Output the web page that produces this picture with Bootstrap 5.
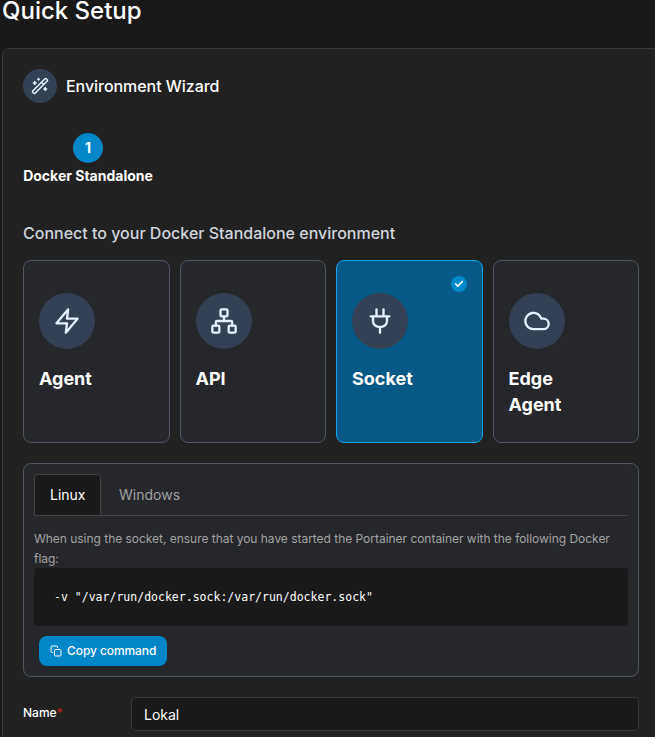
<!DOCTYPE html>
<html lang="en" data-bs-theme="dark">
<head>
<meta charset="utf-8">
<meta name="viewport" content="width=device-width, initial-scale=1">
<title>Quick Setup</title>
<link href="https://cdn.jsdelivr.net/npm/bootstrap@5.3.0/dist/css/bootstrap.min.css" rel="stylesheet">
<style>
body{background:#191919;color:#fff;font-family:Inter,"Liberation Sans",sans-serif;font-size:14px;line-height:20px;height:737px}
svg{fill:none;stroke:currentColor;stroke-width:2;stroke-linecap:round;stroke-linejoin:round;flex:none}
.page-title{font-size:24px;line-height:22px;padding:0 0 0 2px;margin:0 0 26px;font-weight:500}
.widget{width:658px;height:720px;margin-left:2px;padding:20px;background:#212121;border:1px solid #3a3a3a;border-radius:8px}
.round{background:#344054;color:#e0f2fe;flex:none}
.round-sm{width:34px;height:34px}
.round-lg{width:56px;height:56px}
.widget-title{font-size:16px;font-weight:500;margin-left:9px;letter-spacing:-.05px}
.step{width:130px;margin-top:30px}
.step-num{width:30px;height:30px;background:#0086c9;font-weight:700}
.step-name{font-weight:700;line-height:20px;margin-top:3px;white-space:nowrap}
.section-title{font-size:16px;line-height:24px;font-weight:500;color:#d0d5dd;margin:35px 0 15px}
.options{gap:10px}
.option{flex:1 1 0;min-width:0;height:183px;padding:32px 30px 0 15px;background:#26272b;border:1px solid #4d5761;border-radius:8px}
.option.chosen{background:#065986;border-color:#0ba5ec}
.option-name{font-size:18px;line-height:26px;font-weight:700;margin-top:17px}
.tick{top:15px;right:15px;width:16px;height:16px;background:#0086c9}
.panel{margin-top:20px;height:214px;padding:10px;background:#26272b;border:1px solid #4d5761;border-radius:8px}
.nav-tabs{--bs-nav-tabs-border-color:#444;border-bottom:1px solid #444}
.nav-tabs .nav-link{height:42px;padding:10px 15px;font-size:14px;line-height:20px;color:#a0a0a0;border-radius:4px 4px 0 0}
.nav-tabs .nav-link.active{width:67px;color:#fff;background:#191919;border-color:#444;margin-right:2px}
.hint{font-size:12px;line-height:20px;color:#a3a3a3;margin:13px 0 0;letter-spacing:-.027px}
.command{height:58px;padding:19px 20px;background:#191919;border-radius:4px;font-family:"DejaVu Sans Mono",monospace;font-size:11.5px;line-height:20px;color:#fff;margin:-1px 0 0;letter-spacing:.01px}
.btn-copy{height:30px;width:128px;margin:10px 0 0 5px;padding:0 0 0 11px;background:#0086c9;color:#fff;border:0;border-radius:8px;font-size:12px;font-weight:500;gap:5px;letter-spacing:-.08px}
.name-label{width:108px;font-size:12px;font-weight:500;line-height:20px;padding-top:6px}
.star{color:#b42318}
.name-input{height:34px;padding:6px 12px;font-size:14px;line-height:20px;background:#191919;border:1px solid #383838;border-radius:5px;color:#fff}
</style>
</head>
<body class="overflow-hidden">
<h1 class="page-title">Quick Setup</h1>
<main class="widget">
  <div class="d-flex align-items-center">
    <span class="round round-sm rounded-circle d-flex align-items-center justify-content-center">
      <svg width="18" height="18" viewBox="0 0 24 24"><path d="m21.64 3.64-1.28-1.28a1.21 1.21 0 0 0-1.72 0L2.36 18.64a1.21 1.21 0 0 0 0 1.72l1.28 1.28a1.2 1.2 0 0 0 1.72 0L21.64 5.36a1.2 1.2 0 0 0 0-1.72M14 7l3 3M5 6v4M19 14v4M10 2v2M7 8H3M21 16h-4M11 3H9"/></svg>
    </span>
    <span class="widget-title">Environment Wizard</span>
  </div>
  <div class="step d-flex flex-column align-items-center">
    <span class="step-num rounded-circle d-flex align-items-center justify-content-center">1</span>
    <span class="step-name">Docker Standalone</span>
  </div>
  <h2 class="section-title">Connect to your Docker Standalone environment</h2>
  <div class="options d-flex">
    <div class="option">
      <span class="round round-lg rounded-circle d-flex align-items-center justify-content-center"><svg width="28" height="28" viewBox="0 0 24 24"><path d="M13 2 3 14h9l-1 8 10-12h-9l1-8z"/></svg></span>
      <div class="option-name">Agent</div>
    </div>
    <div class="option">
      <span class="round round-lg rounded-circle d-flex align-items-center justify-content-center"><svg width="28" height="28" viewBox="0 0 24 24"><rect x="16" y="16" width="6" height="6" rx="1"/><rect x="2" y="16" width="6" height="6" rx="1"/><rect x="9" y="2" width="6" height="6" rx="1"/><path d="M5 16v-3a1 1 0 0 1 1-1h12a1 1 0 0 1 1 1v3M12 12V8"/></svg></span>
      <div class="option-name">API</div>
    </div>
    <div class="option chosen position-relative">
      <span class="tick position-absolute rounded-circle d-flex align-items-center justify-content-center"><svg width="10" height="10" viewBox="0 0 24 24"><path d="M20 6 9 17l-5-5" stroke-width="4"/></svg></span>
      <span class="round round-lg rounded-circle d-flex align-items-center justify-content-center"><svg width="28" height="28" viewBox="0 0 24 24"><path d="M12 22v-5M9 8V2M15 8V2M18 8v4a5 5 0 0 1-5 5h-2a5 5 0 0 1-5-5V8M4 8h16"/></svg></span>
      <div class="option-name">Socket</div>
    </div>
    <div class="option">
      <span class="round round-lg rounded-circle d-flex align-items-center justify-content-center"><svg width="28" height="28" viewBox="0 0 24 24"><path d="M17.5 19H9a7 7 0 1 1 6.71-9h1.79a4.5 4.5 0 1 1 0 9z"/></svg></span>
      <div class="option-name">Edge Agent</div>
    </div>
  </div>
  <section class="panel">
    <ul class="nav nav-tabs">
      <li class="nav-item"><a class="nav-link active" href="#">Linux</a></li>
      <li class="nav-item"><a class="nav-link" href="#">Windows</a></li>
    </ul>
    <p class="hint">When using the socket, ensure that you have started the Portainer container with the following Docker flag:</p>
    <pre class="command">-v "/var/run/docker.sock:/var/run/docker.sock"</pre>
    <button type="button" class="btn btn-copy d-flex align-items-center"><svg width="12" height="12" viewBox="0 0 24 24"><rect x="9" y="9" width="13" height="13" rx="2"/><path d="M5 15H4a2 2 0 0 1-2-2V4a2 2 0 0 1 2-2h9a2 2 0 0 1 2 2v1"/></svg>Copy command</button>
  </section>
  <div class="name-row d-flex pt-1 mt-3">
    <label class="name-label flex-shrink-0" for="env-name">Name<span class="star">*</span></label>
    <input id="env-name" class="form-control name-input" value="Lokal">
  </div>
</main>
<script src="https://cdn.jsdelivr.net/npm/bootstrap@5.3.0/dist/js/bootstrap.bundle.min.js"></script>
</body>
</html>
